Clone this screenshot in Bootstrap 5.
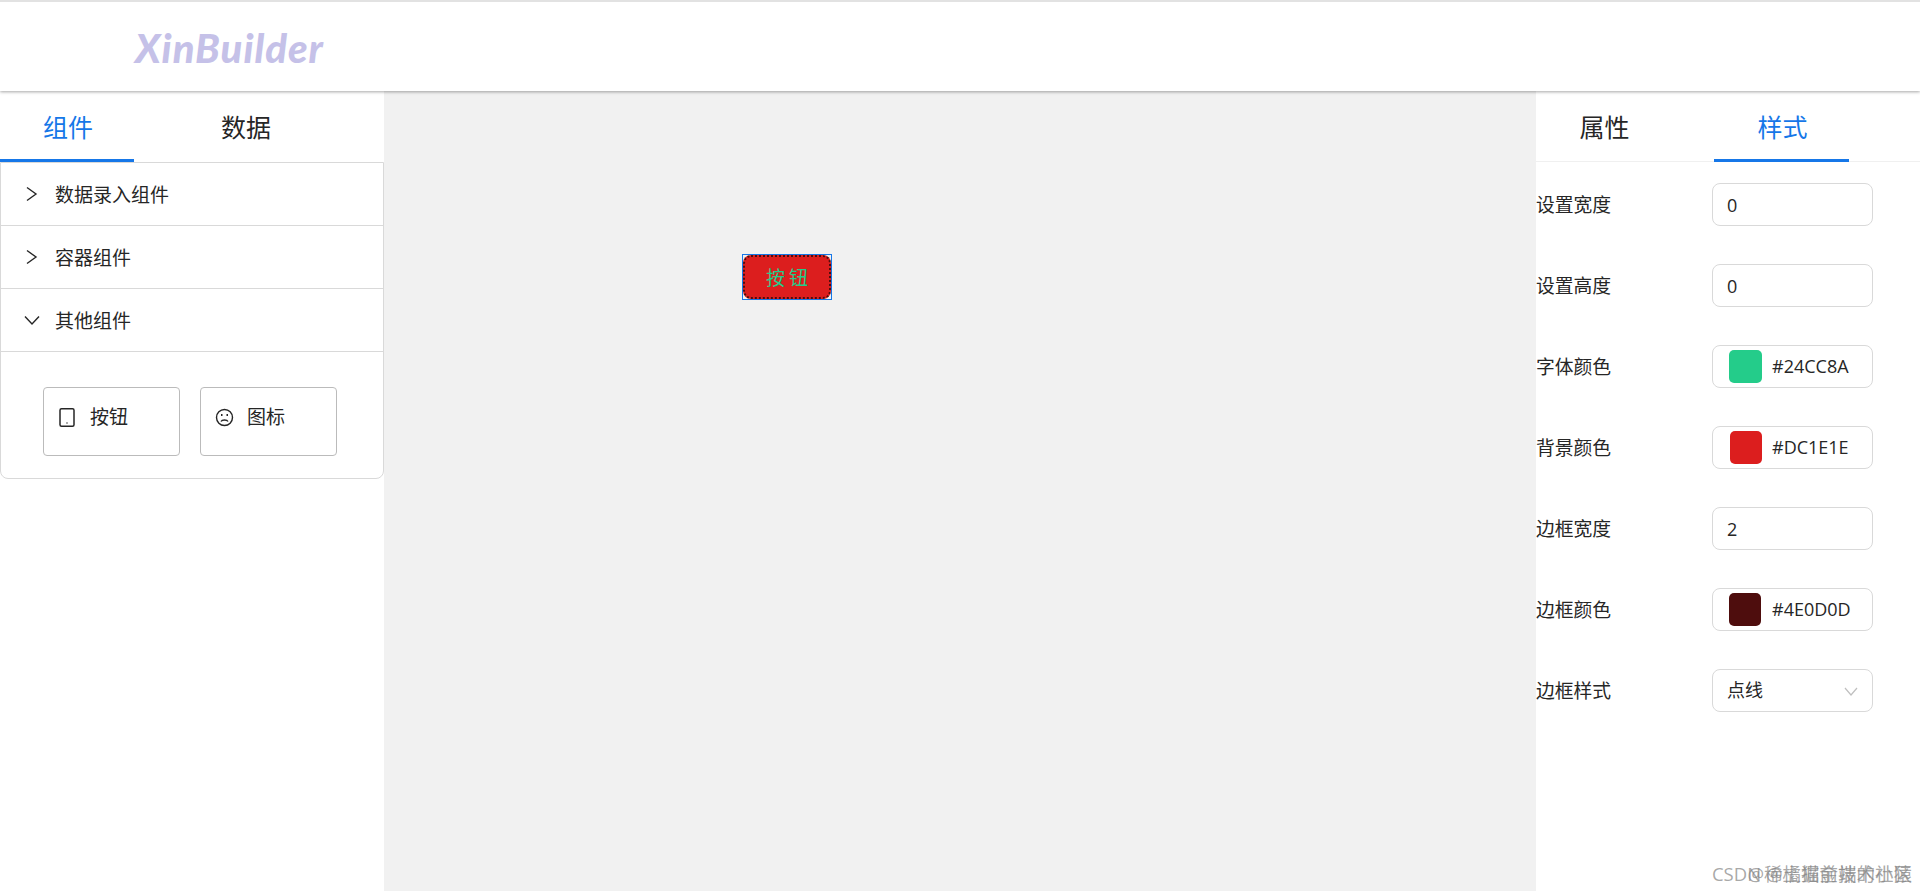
<!DOCTYPE html>
<html lang="zh-CN">
<head>
  <meta charset="UTF-8">
  <title>XinBuilder</title>
  <link href="https://cdn.jsdelivr.net/npm/bootstrap@5.3.0/dist/css/bootstrap.min.css" rel="stylesheet">
  <style>
    html, body { height: 100%; overflow: hidden; }
    body { font-family: "Open Sans", "Noto Sans CJK SC", sans-serif; color: #262626; background: #fff; }
    .top-head { height: 91px; border-top: 2px solid #e2e2e2; padding-left: 135px; box-shadow: 0 1px 3px rgba(0,0,0,.35); position: relative; z-index: 2; background: #fff; }
    .logo-text { font-family: "Lato", sans-serif; font-weight: 900; font-style: italic; font-size: 40px; letter-spacing: 1px; color: #c5c1e8; line-height: 1; padding-top: 3px; }
    .work-area { height: 800px; }
    .left-side { width: 384px; flex: none; padding-top: 2px; }
    .right-side { width: 384px; flex: none; padding-top: 2px; }
    .canvas-area { flex: 1; background: #f1f1f1; position: relative; }
    .tab-bar { gap: 44px; height: 69px; }
    .tab-item { width: 134px; font-size: 25px; text-align: center; line-height: 69px; height: 69px; color: #262626; padding: 0 0 0 2px; }
    .tab-item.on { color: #1677e8; border-bottom: 3px solid #1677e8; }
    .right-side .tab-bar { border-bottom: 1px solid #f0f0f0; gap: 43px; }
    .right-side .tab-item { width: 135px; }
    .fold-box { border: 1px solid #d9d9d9; border-radius: 0 0 8px 8px; }
    .fold-head { height: 63px; border-bottom: 1px solid #d9d9d9; font-size: 19px; padding-left: 23px; gap: 15px; }
    .fold-head span { padding-top: 2px; }
    .fold-head svg { width: 16px; height: 16px; flex: none; }
    .fold-body { padding: 35px 42px 21px; gap: 20px; height: 126px; }
    .comp-item { width: 137px; height: 69px; border: 1px solid #bbb; border-radius: 4px; padding: 17px 0 0 14px; gap: 13px; font-size: 19px; line-height: 25px; }
    .comp-item svg { width: 19px; height: 19px; flex: none; margin-top: 3px; }
    .drawn-btn { position: absolute; left: 358px; top: 163px; width: 90px; height: 46px; border: 1px solid #1677e8; }
    .drawn-btn span { display: block; height: 100%; background: #dc1e1e; color: #24cc8a; border: 2px dotted #4e0d0d; border-radius: 8px; font-size: 19px; text-align: center; line-height: 43px; letter-spacing: 4px; padding-left: 4px; }
    .set-list { padding-top: 21px; gap: 38px; }
    .set-row { height: 43px; font-size: 18.8px; }
    .set-row label { width: 176px; flex: none; padding-top: 2px; }
    .set-box { width: 161px; height: 43px; border: 1px solid #d9d9d9; border-radius: 8px; font-size: 18px; color: #262626; padding: 0 14px; box-shadow: none; }
    .swatch-row { padding: 0 16px; gap: 10px; }
    .swatch-pick { width: 33px; height: 33px; border-radius: 5px; flex: none; }
    .pick-green { background: #24cc8a; }
    .pick-red { background: #dc1e1e; margin-left: 1px; width: 32px; }
    .pick-dark { background: #4e0d0d; width: 32px; margin-right: 1px; }
    .mark-line { position: absolute; right: 8px; bottom: 5px; font-size: 18.5px; color: rgba(130,130,130,.7); white-space: nowrap; line-height: 24px; }
    .mark-over { position: absolute; right: 0; top: 0; }
  </style>
</head>
<body>
  <header class="top-head d-flex align-items-center">
    <div class="logo-text">XinBuilder</div>
  </header>

  <div class="work-area d-flex">
    <aside class="left-side">
      <div class="tab-bar d-flex">
        <div class="tab-item on">组件</div>
        <div class="tab-item">数据</div>
      </div>
      <div class="fold-box">
        <div class="fold-head d-flex align-items-center">
          <svg viewBox="0 0 16 16" fill="none" stroke="#262626" stroke-width="1.4"><path d="M3 1.5l9 6.5-9 6.5"/></svg>
          <span>数据录入组件</span>
        </div>
        <div class="fold-head d-flex align-items-center">
          <svg viewBox="0 0 16 16" fill="none" stroke="#262626" stroke-width="1.4"><path d="M3 1.5l9 6.5-9 6.5"/></svg>
          <span>容器组件</span>
        </div>
        <div class="fold-head d-flex align-items-center">
          <svg viewBox="0 0 16 16" fill="none" stroke="#262626" stroke-width="1.4"><path d="M1 4.5l7 7.5 7-7.5"/></svg>
          <span>其他组件</span>
        </div>
        <div class="fold-body d-flex">
          <div class="comp-item d-flex">
            <svg viewBox="0 0 19 19" fill="none" stroke="#262626" stroke-width="1.5"><rect x="2" y="0.8" width="14" height="17.4" rx="1.5"/><path d="M8.5 15h1"/></svg>
            <span>按钮</span>
          </div>
          <div class="comp-item d-flex">
            <svg viewBox="0 0 19 19" fill="none" stroke="#262626" stroke-width="1.4"><circle cx="9.5" cy="9.5" r="8"/><path d="M6 13.5c1-2 6-2 7 0"/><path d="M6 7h1.5M11.5 7H13" stroke-width="2"/></svg>
            <span>图标</span>
          </div>
        </div>
      </div>
    </aside>

    <main class="canvas-area">
      <div class="drawn-btn"><span>按钮</span></div>
    </main>

    <aside class="right-side">
      <div class="tab-bar d-flex">
        <div class="tab-item">属性</div>
        <div class="tab-item on">样式</div>
      </div>
      <div class="set-list d-flex flex-column">
        <div class="set-row d-flex align-items-center">
          <label>设置宽度</label>
          <input class="form-control set-box" value="0">
        </div>
        <div class="set-row d-flex align-items-center">
          <label>设置高度</label>
          <input class="form-control set-box" value="0">
        </div>
        <div class="set-row d-flex align-items-center">
          <label>字体颜色</label>
          <div class="set-box swatch-row d-flex align-items-center"><i class="swatch-pick pick-green"></i><span>#24CC8A</span></div>
        </div>
        <div class="set-row d-flex align-items-center">
          <label>背景颜色</label>
          <div class="set-box swatch-row d-flex align-items-center"><i class="swatch-pick pick-red"></i><span>#DC1E1E</span></div>
        </div>
        <div class="set-row d-flex align-items-center">
          <label>边框宽度</label>
          <input class="form-control set-box" value="2">
        </div>
        <div class="set-row d-flex align-items-center">
          <label>边框颜色</label>
          <div class="set-box swatch-row d-flex align-items-center"><i class="swatch-pick pick-dark"></i><span>#4E0D0D</span></div>
        </div>
        <div class="set-row d-flex align-items-center">
          <label>边框样式</label>
          <div class="set-box d-flex align-items-center justify-content-between">
            <span>点线</span>
            <svg width="14" height="14" viewBox="0 0 14 14" fill="none" stroke="#bfbfbf" stroke-width="1.2"><path d="M1 4l6 7 6-7"/></svg>
          </div>
        </div>
      </div>
    </aside>
  </div>

  <div class="mark-line">CSDN @橘猫前端的小猿<span class="mark-over">@稀土掘金技术社区</span></div>

  <script src="https://cdn.jsdelivr.net/npm/bootstrap@5.3.0/dist/js/bootstrap.bundle.min.js"></script>
</body>
</html>
